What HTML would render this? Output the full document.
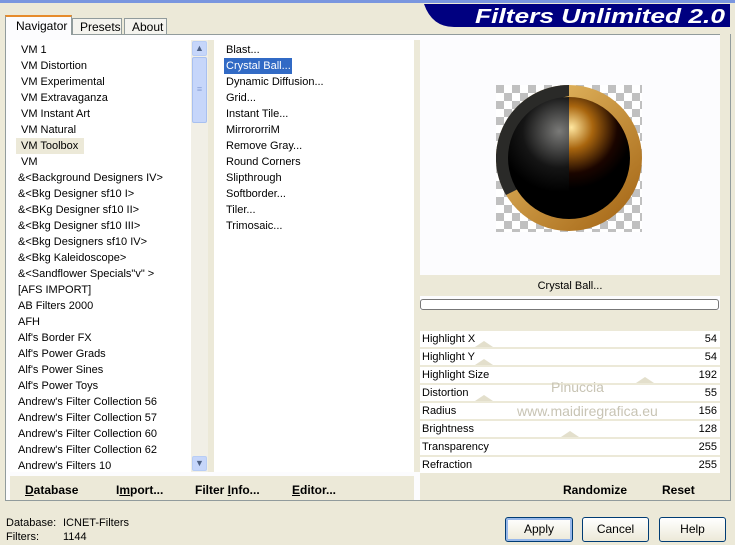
<!DOCTYPE html><html><head><style>
*{margin:0;padding:0;box-sizing:border-box}
body{width:735px;height:545px;background:#ece9d8;font-family:"Liberation Sans",sans-serif;font-size:11px;color:#000;position:relative;overflow:hidden}
.a{position:absolute;white-space:nowrap}
.it{position:absolute;line-height:16px;height:16px;margin-top:1px}
.btn{position:absolute;border:1px solid #003c74;border-radius:3px;background:linear-gradient(#fff,#ece9d8);text-align:center;line-height:23px;font-size:12px}
.row{position:absolute;left:420px;width:300px;height:16px;background:#fff;line-height:16px;font-size:11px}
.row span{position:absolute;left:2px}.row b{position:absolute;right:3px;font-weight:normal}
.tri{position:absolute;top:10px;width:0;height:0;border-left:9px solid transparent;border-right:9px solid transparent;border-bottom:6px solid #e3dfcc}
</style></head><body>
<div class="a" style="left:0;top:0;width:735px;height:3px;background:#7a96df"></div>
<svg class="a" style="left:424px;top:4px" width="311" height="24"><path d="M0 0H306V23H30Q8 23 0 0Z" fill="#000080"/><text x="51" y="19" fill="#fff" font-family="Liberation Sans" font-weight="bold" font-style="italic" font-size="20" textLength="250" lengthAdjust="spacingAndGlyphs">Filters Unlimited 2.0</text></svg>
<div class="a" style="left:5px;top:34px;width:726px;height:467px;border:1px solid #919b9c;background:#fcfcfe"></div>
<div class="a" style="left:5px;top:15px;width:67px;height:20px;border:1px solid #919b9c;border-top:2px solid #e68b2c;border-bottom:none;background:#fcfcfe;padding:2px 0 0 10px;font-size:12px">Navigator</div>
<div class="a" style="left:72px;top:18px;width:50px;height:16px;border:1px solid #919b9c;border-bottom:none;background:#f4f3ee;padding:1px 0 0 7px;font-size:12px">Presets</div>
<div class="a" style="left:124px;top:18px;width:43px;height:16px;border:1px solid #919b9c;border-bottom:none;background:#f4f3ee;padding:1px 0 0 7px;font-size:12px">About</div>
<div class="a" style="left:10px;top:40px;width:181px;height:432px;background:#fff"></div>
<div class="a" style="left:16px;top:138px;width:68px;height:16px;background:#ece9d8"></div>
<div class="a" style="left:191px;top:40px;width:17px;height:432px;background:#f1efe6"></div>
<div class="a" style="left:192px;top:41px;width:15px;height:15px;border:1px solid #b8cdf5;border-radius:2px;background:#c6d6fa;color:#4d6185;text-align:center;font-size:9px;line-height:13px">▲</div>
<div class="a" style="left:192px;top:57px;width:15px;height:66px;border:1px solid #a8c0f0;border-radius:2px;background:#c6d6fa;color:#8aa2d8;text-align:center;line-height:62px;font-size:9px">≡</div>
<div class="a" style="left:192px;top:456px;width:15px;height:15px;border:1px solid #b8cdf5;border-radius:2px;background:#c6d6fa;color:#4d6185;text-align:center;font-size:9px;line-height:13px">▼</div>
<div class="a" style="left:208px;top:40px;width:6px;height:432px;background:#ece9d8"></div>
<div class="it" style="left:21px;top:41px">VM 1</div>
<div class="it" style="left:21px;top:57px">VM Distortion</div>
<div class="it" style="left:21px;top:73px">VM Experimental</div>
<div class="it" style="left:21px;top:89px">VM Extravaganza</div>
<div class="it" style="left:21px;top:105px">VM Instant Art</div>
<div class="it" style="left:21px;top:121px">VM Natural</div>
<div class="it" style="left:21px;top:137px">VM Toolbox</div>
<div class="it" style="left:21px;top:153px">VM</div>
<div class="it" style="left:18px;top:169px">&amp;&lt;Background Designers IV&gt;</div>
<div class="it" style="left:18px;top:185px">&amp;&lt;Bkg Designer sf10 I&gt;</div>
<div class="it" style="left:18px;top:201px">&amp;&lt;BKg Designer sf10 II&gt;</div>
<div class="it" style="left:18px;top:217px">&amp;&lt;Bkg Designer sf10 III&gt;</div>
<div class="it" style="left:18px;top:233px">&amp;&lt;Bkg Designers sf10 IV&gt;</div>
<div class="it" style="left:18px;top:249px">&amp;&lt;Bkg Kaleidoscope&gt;</div>
<div class="it" style="left:18px;top:265px">&amp;&lt;Sandflower Specials"v" &gt;</div>
<div class="it" style="left:18px;top:281px">[AFS IMPORT]</div>
<div class="it" style="left:18px;top:297px">AB Filters 2000</div>
<div class="it" style="left:18px;top:313px">AFH</div>
<div class="it" style="left:18px;top:329px">Alf's Border FX</div>
<div class="it" style="left:18px;top:345px">Alf's Power Grads</div>
<div class="it" style="left:18px;top:361px">Alf's Power Sines</div>
<div class="it" style="left:18px;top:377px">Alf's Power Toys</div>
<div class="it" style="left:18px;top:393px">Andrew's Filter Collection 56</div>
<div class="it" style="left:18px;top:409px">Andrew's Filter Collection 57</div>
<div class="it" style="left:18px;top:425px">Andrew's Filter Collection 60</div>
<div class="it" style="left:18px;top:441px">Andrew's Filter Collection 62</div>
<div class="it" style="left:18px;top:457px">Andrew's Filters 10</div>
<div class="a" style="left:214px;top:40px;width:200px;height:432px;background:#fff"></div>
<div class="a" style="left:224px;top:58px;width:68px;height:16px;background:#316ac5"></div>
<div class="it" style="left:226px;top:41px">Blast...</div>
<div class="it" style="left:226px;top:57px;color:#fff">Crystal Ball...</div>
<div class="it" style="left:226px;top:73px">Dynamic Diffusion...</div>
<div class="it" style="left:226px;top:89px">Grid...</div>
<div class="it" style="left:226px;top:105px">Instant Tile...</div>
<div class="it" style="left:226px;top:121px">MirrororriM</div>
<div class="it" style="left:226px;top:137px">Remove Gray...</div>
<div class="it" style="left:226px;top:153px">Round Corners</div>
<div class="it" style="left:226px;top:169px">Slipthrough</div>
<div class="it" style="left:226px;top:185px">Softborder...</div>
<div class="it" style="left:226px;top:201px">Tiler...</div>
<div class="it" style="left:226px;top:217px">Trimosaic...</div>
<div class="a" style="left:414px;top:40px;width:6px;height:432px;background:#ece9d8"></div>
<div class="a" style="left:720px;top:34px;width:10px;height:466px;background:#ece9d8"></div>
<svg class="a" style="left:496px;top:85px" width="146" height="147">
<defs><pattern id="ck" width="16" height="16" patternUnits="userSpaceOnUse"><rect width="16" height="16" fill="#fff"/><rect width="8" height="8" fill="#c0c0c0"/><rect x="8" y="8" width="8" height="8" fill="#c0c0c0"/></pattern>
<radialGradient id="g1" cx="0.42" cy="0.28" r="0.5"><stop offset="0" stop-color="#7a7a78"/><stop offset="0.6" stop-color="#151515"/><stop offset="1" stop-color="#000"/></radialGradient>
<radialGradient id="g2" cx="0.52" cy="0.25" r="0.5"><stop offset="0" stop-color="#ffe7a0"/><stop offset="0.35" stop-color="#a8650e"/><stop offset="0.75" stop-color="#1a0500"/><stop offset="1" stop-color="#000"/></radialGradient>
<linearGradient id="rg" x1="0" y1="0" x2="1" y2="1"><stop offset="0" stop-color="#f0c870"/><stop offset="1" stop-color="#a06010"/></linearGradient>
<clipPath id="lh"><rect width="73" height="147"/></clipPath><clipPath id="rh"><rect x="73" width="73" height="147"/></clipPath></defs>
<rect width="146" height="147" fill="url(#ck)"/>
<circle cx="73" cy="73" r="73" fill="url(#rg)"/>
<path d="M73 0A73 73 0 0 0 10 110L30 100A62 62 0 0 1 73 11Z" fill="#2a2a28"/>
<circle cx="73" cy="73" r="61" fill="url(#g1)" clip-path="url(#lh)"/>
<circle cx="73" cy="73" r="61" fill="url(#g2)" clip-path="url(#rh)"/>
</svg>
<div class="a" style="left:420px;top:275px;width:300px;height:21px;background:#ece9d8;text-align:center;line-height:22px">Crystal Ball...</div>
<div class="a" style="left:420px;top:299px;width:299px;height:11px;border:1px solid #777;border-radius:3px;background:#fff"></div>
<div class="a" style="left:420px;top:310px;width:300px;height:20px;background:#ece9d8"></div>
<div class="a" style="left:420px;top:330px;width:300px;height:146px;background:#ece9d8"></div>
<div class="row" style="top:331px"><span>Highlight X</span><b>54</b><div class="tri" style="left:55px"></div></div>
<div class="row" style="top:349px"><span>Highlight Y</span><b>54</b><div class="tri" style="left:55px"></div></div>
<div class="row" style="top:367px"><span>Highlight Size</span><b>192</b><div class="tri" style="left:216px"></div></div>
<div class="row" style="top:385px"><span>Distortion</span><b>55</b><div class="tri" style="left:55px"></div></div>
<div class="row" style="top:403px"><span>Radius</span><b>156</b></div>
<div class="row" style="top:421px"><span>Brightness</span><b>128</b><div class="tri" style="left:141px"></div></div>
<div class="row" style="top:439px"><span>Transparency</span><b>255</b></div>
<div class="row" style="top:457px"><span>Refraction</span><b>255</b></div>
<div class="a" style="left:551px;top:379px;color:#c8c4b4;font-size:14px">Pinuccia</div>
<div class="a" style="left:517px;top:403px;color:#c8c4b4;font-size:14px">www.maidiregrafica.eu</div>
<div class="a" style="left:10px;top:476px;width:404px;height:24px;background:#ece9d8"></div>
<div class="a" style="left:420px;top:476px;width:300px;height:24px;background:#ece9d8"></div>
<div class="a" style="left:25px;top:483px;font-weight:bold;font-size:12px"><u>D</u>atabase</div>
<div class="a" style="left:116px;top:483px;font-weight:bold;font-size:12px">I<u>m</u>port...</div>
<div class="a" style="left:195px;top:483px;font-weight:bold;font-size:12px">Filter <u>I</u>nfo...</div>
<div class="a" style="left:292px;top:483px;font-weight:bold;font-size:12px"><u>E</u>ditor...</div>
<div class="a" style="left:563px;top:483px;font-weight:bold;font-size:12px">Randomize</div>
<div class="a" style="left:662px;top:483px;font-weight:bold;font-size:12px">Reset</div>
<div class="a" style="left:6px;top:517px">Database:</div><div class="a" style="left:63px;top:517px">ICNET-Filters</div>
<div class="a" style="left:6px;top:531px">Filters:</div><div class="a" style="left:63px;top:531px">1144</div>
<div class="btn" style="left:505px;top:517px;width:68px;height:25px;box-shadow:inset 0 0 0 2px #98b8ea">Apply</div>
<div class="btn" style="left:582px;top:517px;width:67px;height:25px">Cancel</div>
<div class="btn" style="left:659px;top:517px;width:67px;height:25px">Help</div>
</body></html>
